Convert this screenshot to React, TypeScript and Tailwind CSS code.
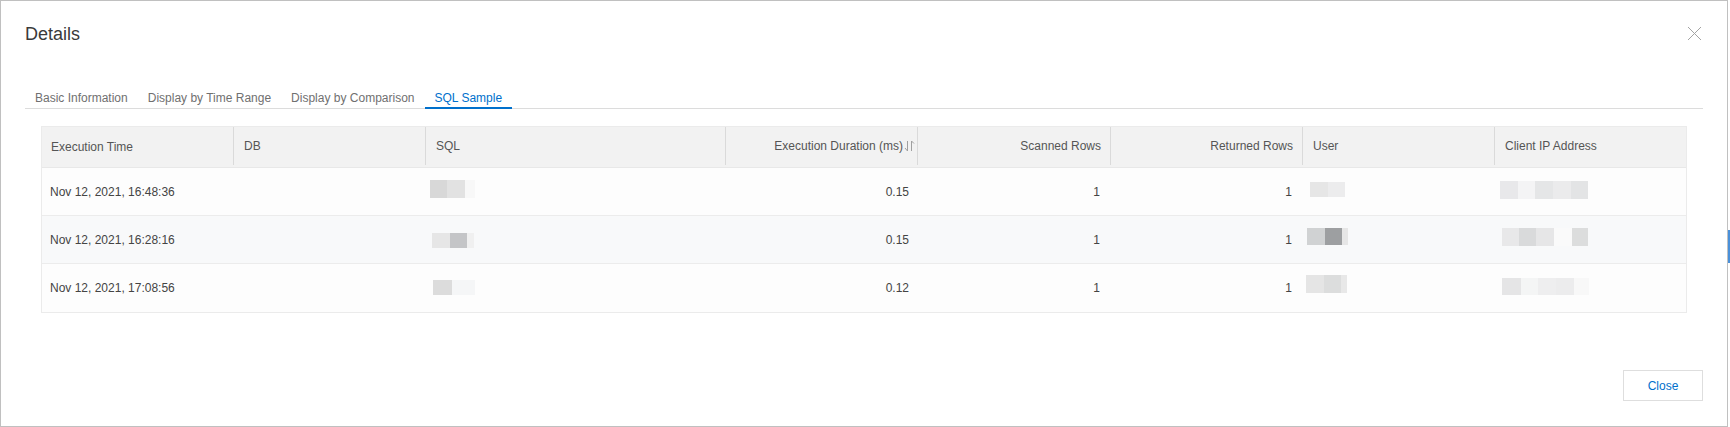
import React from 'react';

type Block = [number, string];
type Blur = { x: number; y: number; h: number; blocks: Block[] };

interface Row {
  time: string;
  duration: string;
  scanned: string;
  returned: string;
  bg: string;
  sql: Blur;
  user: Blur;
  ip: Blur;
}

const rows: Row[] = [
  {
    time: 'Nov 12, 2021, 16:48:36',
    duration: '0.15',
    scanned: '1',
    returned: '1',
    bg: 'bg-[#fdfdfd]',
    sql: { x: 5, y: 12, h: 18, blocks: [[17, '#d8d8d8'], [18, '#e2e2e2'], [10, '#f8f8f8']] },
    user: { x: 8, y: 14, h: 15, blocks: [[18, '#e6e6e6'], [17, '#ececed']] },
    ip: { x: 6, y: 13, h: 18, blocks: [[18, '#e8e8ea'], [17, '#f4f4f5'], [18, '#e5e6e7'], [18, '#ebebec'], [17, '#e3e4e5']] },
  },
  {
    time: 'Nov 12, 2021, 16:28:16',
    duration: '0.15',
    scanned: '1',
    returned: '1',
    bg: 'bg-[#f8f9fa]',
    sql: { x: 7, y: 17, h: 15, blocks: [[18, '#e6e6e6'], [17, '#c4c5c7'], [7, '#f0f0f0']] },
    user: { x: 5, y: 12, h: 17, blocks: [[18, '#d0d2d3'], [17, '#9d9fa1'], [6, '#e6e6e6']] },
    ip: { x: 8, y: 12, h: 18, blocks: [[17, '#e8e8e9'], [17, '#d9dadb'], [18, '#e6e6e7'], [18, '#fafafa'], [16, '#dcdddd']] },
  },
  {
    time: 'Nov 12, 2021, 17:08:56',
    duration: '0.12',
    scanned: '1',
    returned: '1',
    bg: 'bg-[#fdfdfd]',
    sql: { x: 8, y: 16, h: 15, blocks: [[19, '#dcdcdc'], [23, '#f5f6f7']] },
    user: { x: 4, y: 11, h: 18, blocks: [[18, '#e5e5e5'], [17, '#dcdddd'], [6, '#e8e8e8']] },
    ip: { x: 8, y: 14, h: 17, blocks: [[19, '#e5e5e6'], [17, '#f4f5f5'], [18, '#eeeeef'], [18, '#ececed'], [15, '#f8f8f8']] },
  },
];

// masked value (the screenshot had these pixelated)
function Masked({ b }: { b: Blur }) {
  return (
    <div className="flex" style={{ marginLeft: b.x, marginTop: b.y, height: b.h }}>
      {b.blocks.map(([w, c], i) => (
        <span key={i} className="block h-full" style={{ width: w, background: c }} />
      ))}
    </div>
  );
}

function SortIcon() {
  return (
    <svg width="11" height="12" viewBox="0 0 11 12" fill="none" stroke="#a0a0a0" strokeWidth="1" className="ml-[1px]">
      <path d="M3.5 1v10M3.5 11L1 8" />
      <path d="M7.5 11V1M7.5 1L10 3.5" />
    </svg>
  );
}

const tabs = ['Basic Information', 'Display by Time Range', 'Display by Comparison', 'SQL Sample'];
const cols = 'grid grid-cols-[191px_192px_300px_192px_193px_192px_192px_192px]';

export default function App() {
  return (
    <div className="flex w-[1730px] h-[427px] bg-white text-[#444] font-['Liberation_Sans',Arial,sans-serif]">
      <div className="w-[1728px] h-[427px] border border-[#c0c0c0] flex flex-col">
        <div className="flex items-start justify-between pt-[24px] pl-[24px] pr-[25px]">
          <h1 className="text-[18px] leading-[18px] text-[#3a3a3a]">Details</h1>
          <svg width="15" height="15" viewBox="0 0 15 15" stroke="#a3a3a3" strokeWidth="1" className="mt-[1px]">
            <path d="M1 1l13 13M14 1L1 14" />
          </svg>
        </div>

        <div className="mx-[24px] mt-[47px] flex border-b border-[#dcdcdc]">
          {tabs.map((t) => {
            const active = t === 'SQL Sample';
            return (
              <div
                key={t}
                className={
                  'px-[10px] pb-[1px] text-[12px] leading-[16px] -mb-px border-b-2 ' +
                  (active ? 'border-[#0070cc] text-[#0070cc]' : 'border-transparent text-[#707070]')
                }
              >
                {t}
              </div>
            );
          })}
        </div>

        <div className="mx-[40px] mt-[17px] w-[1646px] border border-[#ebebeb] text-[12px]">
          <div className={cols + ' h-[41px] bg-[#f2f2f2] border-b border-[#e8e8e8] text-[#555]'}>
            <div className="flex items-center pl-[9px]">Execution Time</div>
            <div className="flex items-center pl-[10px] border-l border-[#dadada] mb-[2px]">DB</div>
            <div className="flex items-center pl-[10px] border-l border-[#dadada] mb-[2px]">SQL</div>
            <div className="flex items-center justify-end pr-[2px] border-l border-[#dadada] mb-[2px]">
              <span>Execution Duration (ms)</span>
              <SortIcon />
            </div>
            <div className="flex items-center justify-end pr-[9px] border-l border-[#dadada] mb-[2px]">Scanned Rows</div>
            <div className="flex items-center justify-end pr-[9px] border-l border-[#dadada] mb-[2px]">Returned Rows</div>
            <div className="flex items-center pl-[10px] border-l border-[#dadada] mb-[2px]">User</div>
            <div className="flex items-center pl-[10px] border-l border-[#dadada] mb-[2px]">Client IP Address</div>
          </div>
          {rows.map((r, i) => (
            <div
              key={i}
              className={cols + ' h-[48px] ' + r.bg + (i < rows.length - 1 ? ' border-b border-[#ececec]' : '')}
            >
              <div className="flex items-center pl-[8px]">{r.time}</div>
              <div />
              <div className="flex items-start">
                <Masked b={r.sql} />
              </div>
              <div className="flex items-center justify-end pr-[8px]">{r.duration}</div>
              <div className="flex items-center justify-end pr-[10px]">{r.scanned}</div>
              <div className="flex items-center justify-end pr-[10px]">{r.returned}</div>
              <div className="flex items-start">
                <Masked b={r.user} />
              </div>
              <div className="flex items-start">
                <Masked b={r.ip} />
              </div>
            </div>
          ))}
        </div>

        <div className="flex-1" />
        <div className="flex justify-end pr-[24px] pb-[25px]">
          <button className="w-[80px] h-[31px] border border-[#dedede] bg-white text-[12px] text-[#0070cc]">
            Close
          </button>
        </div>
      </div>
      <div className="w-[2px] flex flex-col bg-white">
        <div className="h-[230px]" />
        <div className="h-[33px] bg-[#4a90d9]" />
      </div>
    </div>
  );
}
